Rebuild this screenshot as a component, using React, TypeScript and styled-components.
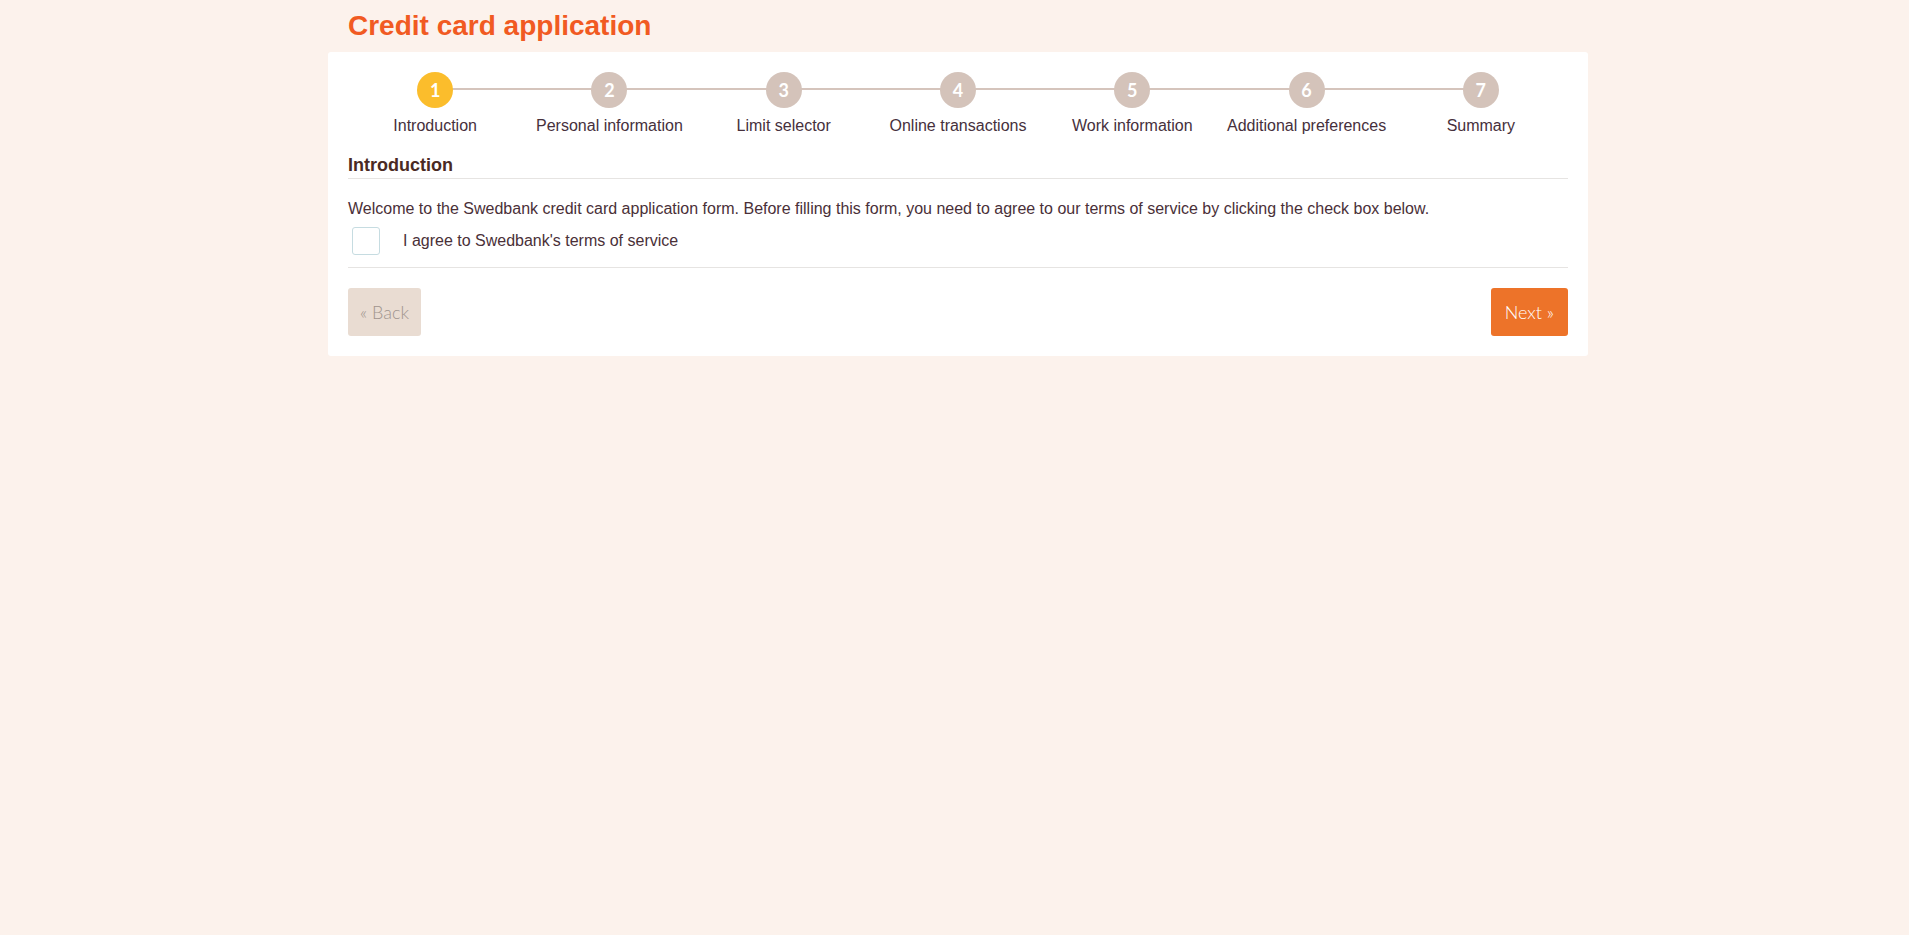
import styled, { createGlobalStyle } from 'styled-components';

const GlobalStyle = createGlobalStyle`
  html, body {
    margin: 0;
    padding: 0;
    background-color: #fcf2ec;
    font-family: 'Liberation Sans', Arial, sans-serif;
    color: #4a3038;
  }
`;

const steps = [
  'Introduction',
  'Personal information',
  'Limit selector',
  'Online transactions',
  'Work information',
  'Additional preferences',
  'Summary',
];

const Wrapper = styled.div`
  width: 1260px;
  margin-left: 328px;
  min-height: 935px;
`;

const Title = styled.h1`
  margin: 0;
  padding: 10px 0 0 20px;
  height: 42px;
  box-sizing: border-box;
  font-size: 28px;
  font-weight: bold;
  line-height: 32px;
  color: #f15a22;
`;

const Panel = styled.div`
  background-color: #ffffff;
  border-radius: 3px;
  padding: 20px;
  margin-top: 10px;
`;

const Stepper = styled.div`
  display: grid;
  grid-template-columns: repeat(7, 1fr);
  position: relative;
  &::before {
    content: '';
    position: absolute;
    left: calc(100% / 14);
    right: calc(100% / 14);
    top: 16px;
    height: 2px;
    background-color: #d5c4bc;
  }
`;

const Step = styled.div`
  display: flex;
  flex-direction: column;
  align-items: center;
  position: relative;
`;

const Circle = styled.div<{ $active?: boolean }>`
  width: 36px;
  height: 36px;
  border-radius: 50%;
  background-color: ${(p) => (p.$active ? '#fbbd2c' : '#d4c3ba')};
  color: #ffffff;
  font-family: Lato, 'Liberation Sans', sans-serif;
  font-weight: bold;
  font-size: 18px;
  display: flex;
  align-items: center;
  justify-content: center;
`;

const StepLabel = styled.div`
  margin-top: 9px;
  font-size: 16px;
  line-height: 18px;
  color: #46303c;
`;

const SectionTitle = styled.h2`
  margin: 20px 0 0;
  padding-bottom: 2px;
  font-size: 18px;
  font-weight: bold;
  line-height: 21px;
  color: #4a2a24;
  border-bottom: 1px solid #e6e4e2;
`;

const Text = styled.p`
  margin: 20px 0 0;
  font-size: 16px;
  line-height: 19px;
  color: #4a3038;
`;

const CheckRow = styled.label`
  display: flex;
  align-items: center;
  gap: 23px;
  margin-top: 9px;
  padding-left: 4px;
  padding-bottom: 12px;
  border-bottom: 1px solid #e6e4e2;
  font-size: 16px;
  color: #4a3038;
`;

const CheckBox = styled.span`
  width: 28px;
  height: 28px;
  box-sizing: border-box;
  border: 1px solid #c6dce1;
  border-radius: 3px;
  background: #ffffff;
`;

const Actions = styled.div`
  display: flex;
  justify-content: space-between;
  margin-top: 20px;
`;

const Button = styled.button<{ $primary?: boolean }>`
  height: 48px;
  padding: 0 ${(p) => (p.$primary ? '14px' : '12px')};
  border: none;
  border-radius: 3px;
  font-family: Lato, 'Liberation Sans', sans-serif;
  font-weight: 300;
  font-size: 18px;
  background-color: ${(p) => (p.$primary ? '#ed7329' : '#e9dcd2')};
  color: ${(p) => (p.$primary ? '#ffffff' : '#a0948e')};
  cursor: pointer;
`;

export default function App() {
  return (
    <Wrapper>
      <GlobalStyle />
      <Title>Credit card application</Title>
      <Panel>
        <Stepper>
          {steps.map((s, i) => (
            <Step key={s}>
              <Circle $active={i === 0}>{i + 1}</Circle>
              <StepLabel>{s}</StepLabel>
            </Step>
          ))}
        </Stepper>
        <SectionTitle>Introduction</SectionTitle>
        <Text>
          Welcome to the Swedbank credit card application form. Before filling this form, you need to
          agree to our terms of service by clicking the check box below.
        </Text>
        <CheckRow>
          <CheckBox />
          I agree to Swedbank's terms of service
        </CheckRow>
        <Actions>
          <Button>« Back</Button>
          <Button $primary>Next »</Button>
        </Actions>
      </Panel>
    </Wrapper>
  );
}
